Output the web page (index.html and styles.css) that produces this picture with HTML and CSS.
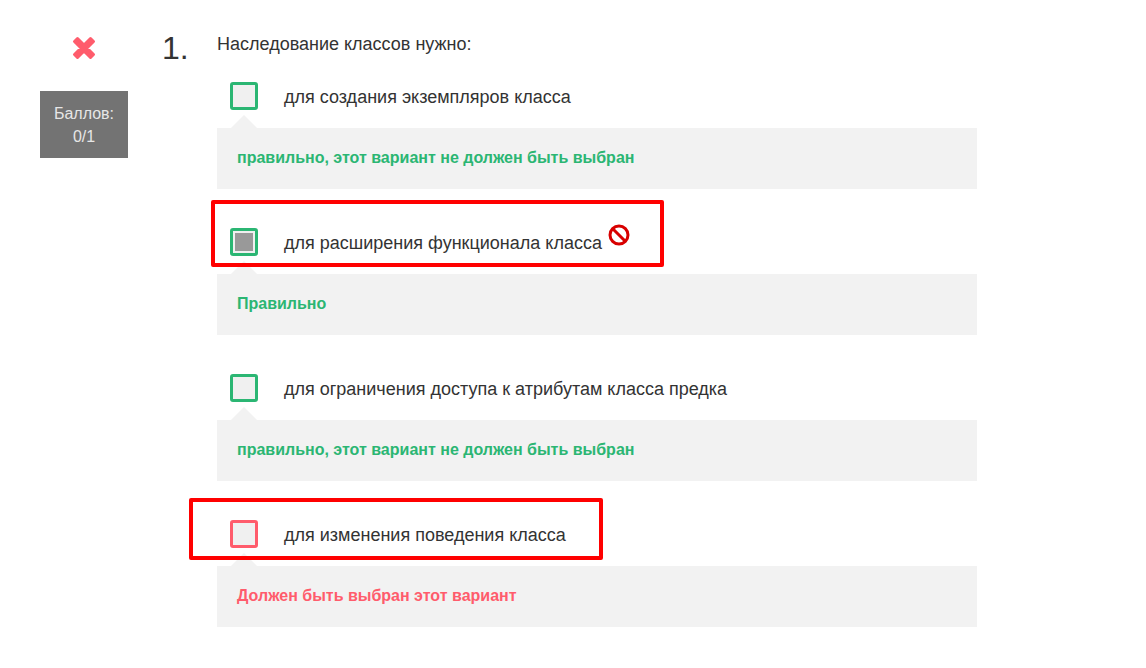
FILE: index.html
```html
<!DOCTYPE html>
<html lang="ru">
<head>
<meta charset="utf-8">
<title>Наследование классов</title>
<link rel="stylesheet" href="styles.css">
</head>
<body>
<main class="question">
  <aside class="result">
    <svg class="cross" viewBox="0 0 24 24" role="img" aria-label="Неправильно"><path d="M5.500 2.500 12 9 18.500 2.500 21.500 5.500 15 12 21.500 18.500 18.500 21.500 12 15 5.500 21.500 2.500 18.500 9 12 2.500 5.500Z"/></svg>
    <div class="score">Баллов:<br>0/1</div>
  </aside>
  <div class="number">1.</div>
  <section class="body">
    <h1 class="title">Наследование классов нужно:</h1>
    <div class="answer">
      <label class="option"><input class="box" type="checkbox"><span class="text">для создания экземпляров класса</span></label>
      <p class="feedback">правильно, этот вариант не должен быть выбран</p>
    </div>
    <div class="answer">
      <label class="option"><input class="box" type="checkbox" checked><span class="text">для расширения функционала класса</span></label>
      <p class="feedback">Правильно</p>
      <div class="mark mark-first"><svg class="ban" viewBox="0 0 22 22" aria-hidden="true"><circle cx="11" cy="11" r="9"/><path d="M4.500 4.500 17.500 17.500"/></svg></div>
    </div>
    <div class="answer">
      <label class="option"><input class="box" type="checkbox"><span class="text">для ограничения доступа к атрибутам класса предка</span></label>
      <p class="feedback">правильно, этот вариант не должен быть выбран</p>
    </div>
    <div class="answer wrong">
      <label class="option"><input class="box" type="checkbox"><span class="text">для изменения поведения класса</span></label>
      <p class="feedback">Должен быть выбран этот вариант</p>
      <div class="mark mark-second"></div>
    </div>
  </section>
</main>
</body>
</html>
```
FILE: styles.css
```css
* { box-sizing: border-box; }
body {
  margin: 0;
  background: #fff;
  color: #333;
  font-family: "Liberation Sans", Arial, sans-serif;
  font-size: 18px;
}
.question {
  display: grid;
  grid-template-columns: 88px 89px minmax(0, 760px);
  padding: 32px 40px 0;
}
.result { display: flex; flex-direction: column; align-items: center; }
.cross {
  width: 24px;
  height: 24px;
  margin: 4px 0 31px;
  fill: #ff5c6c;
  stroke: #ff5c6c;
  stroke-width: 3;
  stroke-linejoin: round;
}
.score {
  width: 100%;
  padding: 11px 0 10px;
  background: #737373;
  color: #e6e6e6;
  font-size: 16px;
  line-height: 23px;
  text-align: center;
}
.number { padding-left: 34px; font-size: 32px; line-height: 32px; }
.title { margin: 0 0 19px; font-size: 18px; font-weight: 400; line-height: 24px; }
.answer { position: relative; --state: #2bb673; margin-bottom: 32px; }
.wrong { --state: #ff5c6c; }
.option { display: flex; align-items: center; gap: 26px; padding: 7px 13px 18px; }
.text { padding-top: 2px; }
.box {
  appearance: none;
  flex: none;
  width: 28px;
  height: 28px;
  margin: 0;
  border: 3px solid var(--state);
  border-radius: 3px;
  background: #f0f0f0;
}
.box:checked {
  padding: 2px;
  background: linear-gradient(#999, #999) content-box, #f0f0f0;
}
.feedback {
  position: relative;
  margin: 0;
  padding: 18px 20px 19px;
  background: #f2f2f2;
  color: var(--state);
  font-size: 16px;
  font-weight: 700;
  line-height: 24px;
}
.feedback::before {
  content: "";
  position: absolute;
  left: 14px;
  bottom: 100%;
  border: 13px solid transparent;
  border-top: 0;
  border-bottom-color: #f2f2f2;
}
.mark { position: absolute; border: 4px solid #f00; border-radius: 2px; pointer-events: none; }
.mark-first { left: -6px; top: -21px; width: 453px; height: 67px; }
.mark-second { left: -28px; top: -15px; width: 414px; height: 62px; }
.ban { position: absolute; left: 393px; top: 20px; width: 22px; height: 22px; fill: none; stroke: #d80000; stroke-width: 3; }
```
